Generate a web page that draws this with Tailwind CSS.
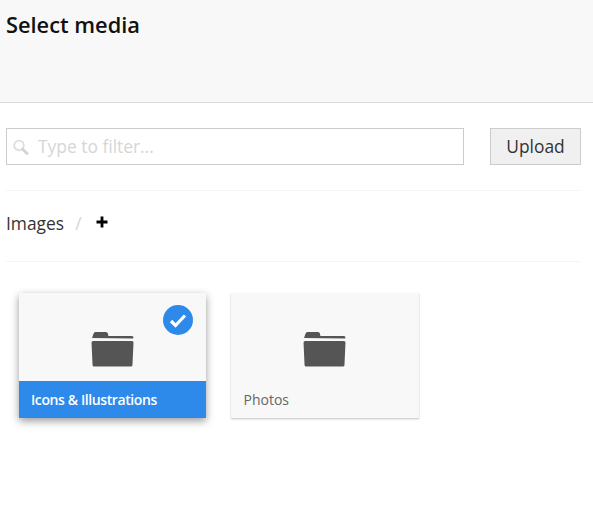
<!DOCTYPE html>
<html>
<head>
<meta charset="utf-8">
<script src="https://cdn.jsdelivr.net/npm/@tailwindcss/browser@4"></script>
</head>
<body class="bg-white font-['Open_Sans',sans-serif] h-[507px] w-[593px] overflow-hidden">
<header class="h-[103px] bg-[#f8f8f8] border-b border-[#d9d9d9] pl-[6px] pt-[11px]">
  <h1 class="text-[21.8px] leading-[28px] font-semibold text-[#111]">Select media</h1>
</header>
<div class="pl-[6px] pr-[12px]">
  <div class="flex justify-between pt-[25px] pb-[25px] border-b border-[#f5f5f5]">
    <div class="w-[458px] h-[37px] border border-[#cccccc] flex items-center pl-[5px] pb-[2px]">
      <svg class="w-[17px] h-[17px] mt-[2px] mr-[9px]" viewBox="0 0 17 17" fill="none">
        <circle cx="7" cy="7.500" r="4.800" stroke="#dcdcdc" stroke-width="1.800"/>
        <path d="M10.500 11l4.500 4.500" stroke="#d4d4d4" stroke-width="2.800" stroke-linecap="round"/>
      </svg>
      <span class="text-[17.4px] text-[#d6d6d6] leading-[24px]">Type to filter...</span>
    </div>
    <button class="w-[91px] h-[37px] bg-[#f0f0f0] border border-[#cccccc] text-[17.4px] text-[#333] leading-[24px] pb-[2px]">Upload</button>
  </div>
  <div class="h-[71px] flex items-center border-b border-[#f5f5f5] pb-[7px]">
    <span class="text-[17.4px] text-[#333] leading-[24px]">Images</span>
    <span class="text-[17.4px] text-[#d4d4d4] leading-[24px] ml-[11px]">/</span>
    <svg class="w-[12px] h-[12px] ml-[14px] mb-[1px]" viewBox="0 0 12 12"><path d="M6 0.500v11M0.500 6h11" stroke="#000" stroke-width="2.800"/></svg>
  </div>
</div>
<div class="flex pl-[19px] pt-[31px] gap-[25px]">
  <div class="relative w-[187px] h-[125px] bg-[#f8f8f8] shadow-[0_3px_8px_rgba(0,0,0,0.4)] flex flex-col">
    <div class="h-[88px] flex items-center justify-center pt-[22px] pr-[1px]">
      <svg class="w-[44px] h-[37px]" viewBox="0 0 43 37" fill="#555555" preserveAspectRatio="none">
        <path d="M2 11h39a1.500 1.500 0 0 1 1.500 1.500l-1 22.500a1.500 1.500 0 0 1-1.500 1.500h-36a1.500 1.500 0 0 1-1.500-1.500l-1-22.500a1.500 1.500 0 0 1 1.500-1.500z"/>
        <path d="M2 8l1.500-4.500a2 2 0 0 1 2-1.500h10a2 2 0 0 1 2 1.500l0.500 2.500h22.500a1.500 1.500 0 0 1 1.500 2.500z"/>
      </svg>
    </div>
    <div class="absolute top-[12px] right-[13px] w-[30px] h-[30px] rounded-full bg-[#2d89ea] flex items-center justify-center">
      <svg class="w-[18px] h-[15px]" viewBox="0 0 18 15" fill="none"><path d="M2 8l4.500 4.500L16 2.500" stroke="#fff" stroke-width="3.200"/></svg>
    </div>
    <div class="h-[37px] bg-[#2d89ea] flex items-center pl-[12px] text-[14px] font-semibold text-white tracking-[-0.4px]">Icons &amp; Illustrations</div>
  </div>
  <div class="w-[188px] h-[125px] bg-[#f8f8f8] shadow-[0_1px_2px_rgba(0,0,0,0.25)] flex flex-col">
    <div class="h-[88px] flex items-center justify-center pt-[22px] pr-[2px]">
      <svg class="w-[44px] h-[37px]" viewBox="0 0 43 37" fill="#555555" preserveAspectRatio="none">
        <path d="M2 11h39a1.500 1.500 0 0 1 1.500 1.500l-1 22.500a1.500 1.500 0 0 1-1.500 1.500h-36a1.500 1.500 0 0 1-1.500-1.500l-1-22.500a1.500 1.500 0 0 1 1.500-1.500z"/>
        <path d="M2 8l1.500-4.500a2 2 0 0 1 2-1.500h10a2 2 0 0 1 2 1.500l0.500 2.500h22.500a1.500 1.500 0 0 1 1.500 2.500z"/>
      </svg>
    </div>
    <div class="h-[37px] flex items-center pl-[12.500px] text-[14px] text-[#666]">Photos</div>
  </div>
</div>
</body>
</html>
